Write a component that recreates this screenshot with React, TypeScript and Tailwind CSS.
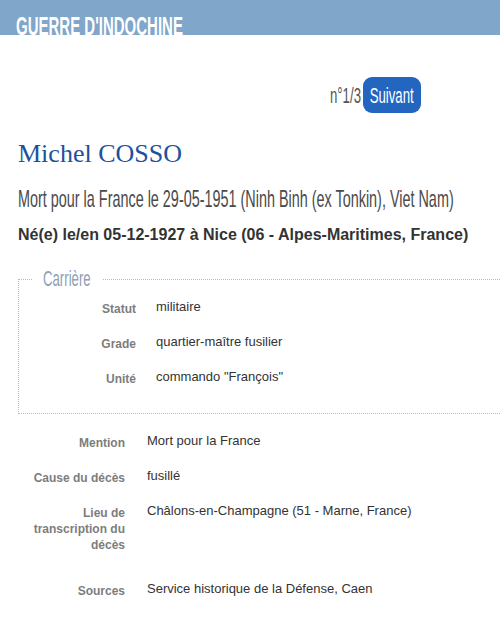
import React from 'react';

interface Row {
  label: string;
  value: string;
}

const carriere: Row[] = [
  { label: 'Statut', value: 'militaire' },
  { label: 'Grade', value: 'quartier-maître fusilier' },
  { label: 'Unité', value: 'commando "François"' },
];

const details: Row[] = [
  { label: 'Mention', value: 'Mort pour la France' },
  { label: 'Cause du décès', value: 'fusillé' },
  { label: 'Lieu de transcription du décès', value: 'Châlons-en-Champagne (51 - Marne, France)' },
  { label: 'Sources', value: 'Service historique de la Défense, Caen' },
];

const InfoRow: React.FC<{ row: Row; labelWidth: string; gap: string; extra?: string }> = ({ row, labelWidth, gap, extra }) => (
  <div className={`flex ${gap} ${extra ?? 'mb-[15px]'}`}>
    <div className={`${labelWidth} shrink-0 pt-[4px] text-right text-[12px] font-bold leading-[16px] text-[#7d7d7d]`}>
      {row.label}
    </div>
    <div className="text-[13px] leading-[20px] text-[#333]">{row.value}</div>
  </div>
);

export default function App() {
  return (
    <div className="h-[617px] w-[500px] overflow-hidden bg-white" style={{ fontFamily: '"Liberation Sans", Arial, sans-serif' }}>
      {/* Top bar */}
      <div className="flex h-[35px] items-end bg-[#80a6c9] pl-[16px]">
        <span className="inline-block origin-bottom-left scale-x-[0.6] whitespace-nowrap text-[25px] font-bold leading-[18px] text-white">
          GUERRE D'INDOCHINE
        </span>
      </div>

      {/* Pagination */}
      <div className="mt-[42px] flex items-center justify-end gap-[2px] pr-[79px]">
        <span className="w-[31px] whitespace-nowrap text-[22px] text-[#555]">
          <span className="inline-block origin-left scale-x-[0.6]">n°1/3</span>
        </span>
        <button className="flex h-[36px] w-[58px] items-center justify-center rounded-[9px] bg-[#2266c0] text-[22px] text-white">
          <span className="inline-block scale-x-[0.6] whitespace-nowrap">Suivant</span>
        </button>
      </div>

      <div className="pl-[18px]">
        <h1
          className="mt-[25px] text-[26px] leading-[32px] text-[#21509c]"
          style={{ fontFamily: '"Liberation Serif", Georgia, serif' }}
        >
          Michel COSSO
        </h1>
        <p className="mt-[15px] h-[28px] w-[436px] text-[24px] leading-[28px] text-[#4a4a4a]">
          <span className="inline-block origin-left scale-x-[0.6] whitespace-nowrap">
            Mort pour la France le 29-05-1951 (Ninh Binh (ex Tonkin), Viet Nam)
          </span>
        </p>
        <p className="mt-[12px] whitespace-nowrap text-[16px] font-bold leading-[20px] text-[#333]">
          Né(e) le/en 05-12-1927 à Nice (06 - Alpes-Maritimes, France)
        </p>

        {/* Carrière */}
        <fieldset className="mt-[22px] w-[520px] border border-dotted border-[#bbb] pb-[26px]">
          <legend className="ml-[14px] w-[69px] whitespace-nowrap pl-[10px] text-[22px] leading-[24px] text-[#8da0b8]">
            <span className="inline-block origin-left scale-x-[0.6]">Carrière</span>
          </legend>
          <div className="mt-[6px]">
            {carriere.map((r, i) => (
              <InfoRow
                key={r.label}
                row={r}
                labelWidth="w-[117px]"
                gap="gap-[20px]"
                extra={i === carriere.length - 1 ? 'mb-0' : undefined}
              />
            ))}
          </div>
        </fieldset>

        <div className="mt-[17px]">
          {details.map((r) => (
            <InfoRow
              key={r.label}
              row={r}
              labelWidth="w-[107px]"
              gap="gap-[22px]"
              extra={r.label.startsWith('Lieu') ? 'mb-[26px]' : undefined}
            />
          ))}
        </div>
      </div>
    </div>
  );
}
